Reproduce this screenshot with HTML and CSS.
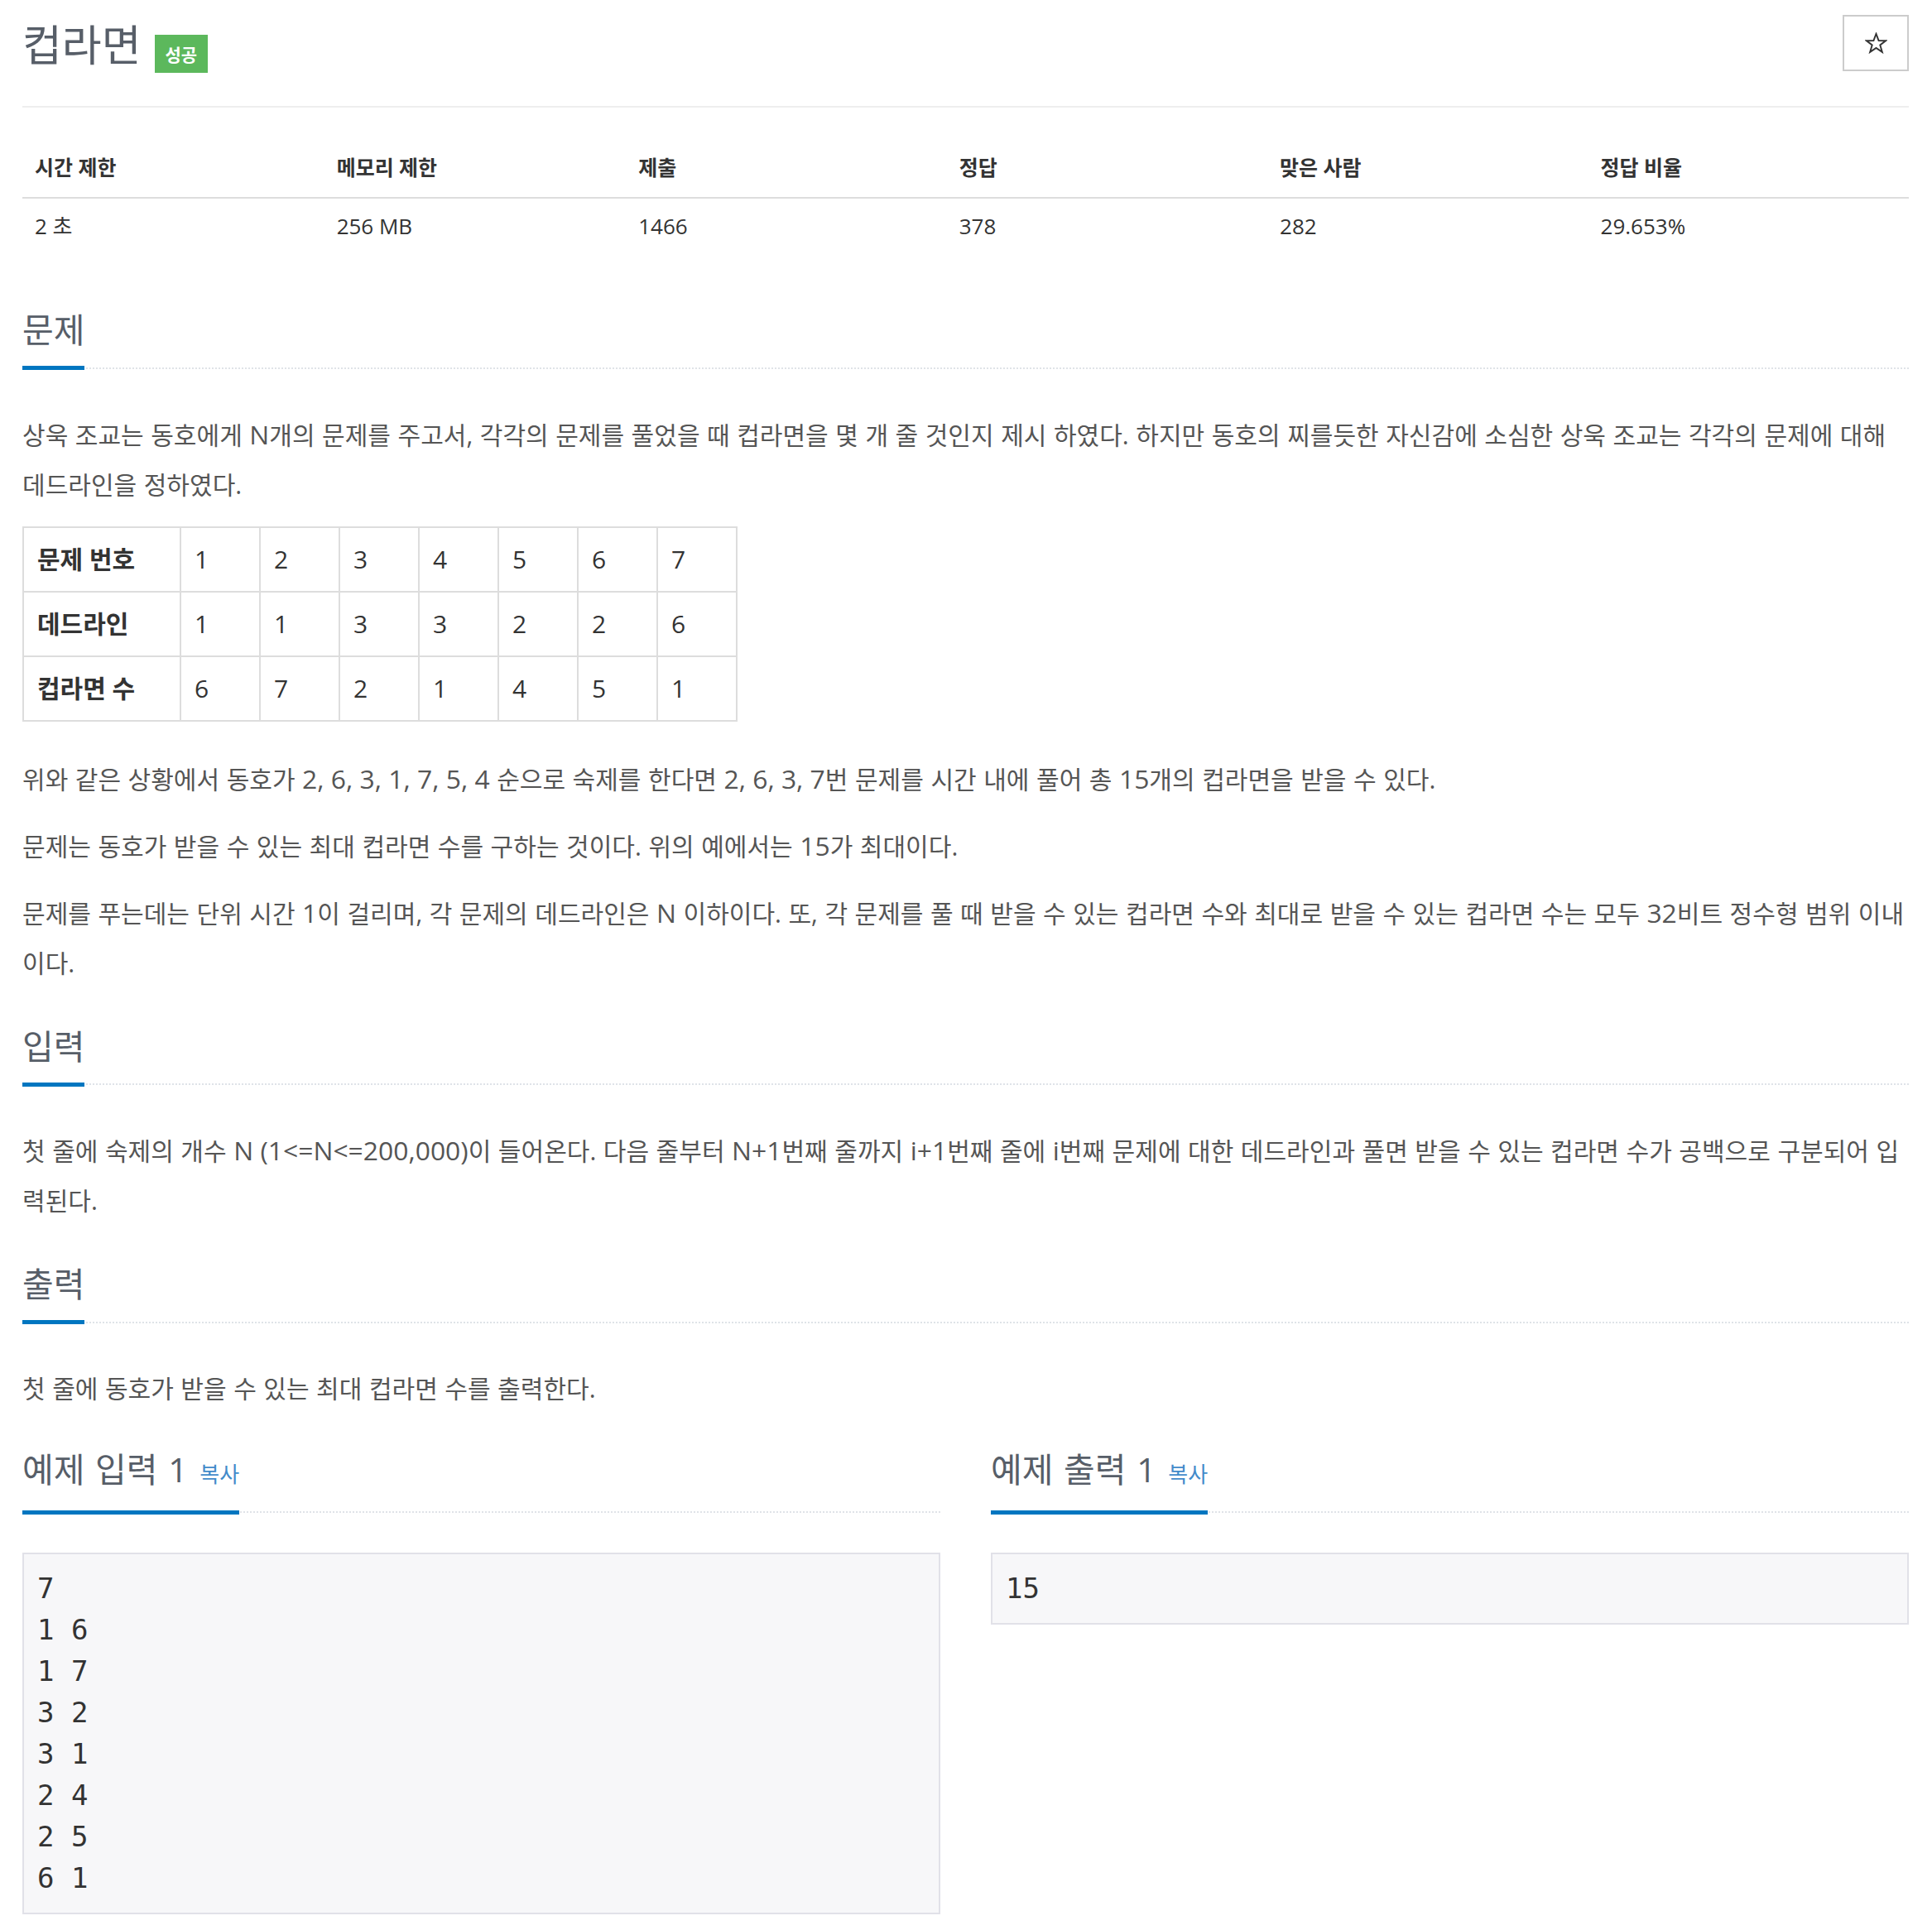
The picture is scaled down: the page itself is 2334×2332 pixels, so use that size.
FILE: index.html
```html
<!DOCTYPE html>
<html lang="ko">
<head>
<meta charset="utf-8">
<title>컵라면</title>
<link rel="stylesheet" href="styles.css">
</head>
<body>
<div class="page">
  <header class="page-header">
    <h1 class="title"><span class="title-text">컵라면</span><span class="badge">성공</span></h1>
    <button class="star-btn" type="button" aria-label="즐겨찾기">
      <svg width="27" height="26" viewBox="0 0 28 27"><polygon points="14,2 17.2,10.4 26,10.6 19,16 21.6,24.8 14,19.6 6.4,24.8 9,16 2,10.6 10.8,10.4" fill="none" stroke="#333" stroke-width="2" stroke-linejoin="miter"/></svg>
    </button>
  </header>

  <table class="stats">
    <thead>
      <tr><th class="w16">시간 제한</th><th class="w16">메모리 제한</th><th class="w17">제출</th><th class="w17">정답</th><th class="w17">맞은 사람</th><th class="w17">정답 비율</th></tr>
    </thead>
    <tbody>
      <tr><td>2 초</td><td>256 MB</td><td>1466</td><td>378</td><td>282</td><td>29.653%</td></tr>
    </tbody>
  </table>

  <section class="section first">
    <h2 class="headline"><span class="hl">문제</span></h2>
    <div class="text">
      <p>상욱 조교는 동호에게 <span class="en">N</span>개의 문제를 주고서, 각각의 문제를 풀었을 때 컵라면을 몇 개 줄 것인지 제시 하였다. 하지만 동호의 찌를듯한 자신감에 소심한 상욱 조교는 각각의 문제에 대해 데드라인을 정하였다.</p>
      <table class="deadline">
        <tbody>
          <tr><th>문제 번호</th><td>1</td><td>2</td><td>3</td><td>4</td><td>5</td><td>6</td><td>7</td></tr>
          <tr><th>데드라인</th><td>1</td><td>1</td><td>3</td><td>3</td><td>2</td><td>2</td><td>6</td></tr>
          <tr><th>컵라면 수</th><td>6</td><td>7</td><td>2</td><td>1</td><td>4</td><td>5</td><td>1</td></tr>
        </tbody>
      </table>
      <p>위와 같은 상황에서 동호가 <span class="en">2, 6, 3, 1, 7, 5, 4</span> 순으로 숙제를 한다면 <span class="en">2, 6, 3, 7</span>번 문제를 시간 내에 풀어 총 <span class="en">15</span>개의 컵라면을 받을 수 있다.</p>
      <p>문제는 동호가 받을 수 있는 최대 컵라면 수를 구하는 것이다. 위의 예에서는 <span class="en">15</span>가 최대이다.</p>
      <p>문제를 푸는데는 단위 시간 <span class="en">1</span>이 걸리며, 각 문제의 데드라인은 <span class="en">N</span> 이하이다. 또, 각 문제를 풀 때 받을 수 있는 컵라면 수와 최대로 받을 수 있는 컵라면 수는 모두 <span class="en">32</span>비트 정수형 범위 이내이다.</p>
    </div>
  </section>

  <section class="section">
    <h2 class="headline"><span class="hl">입력</span></h2>
    <div class="text">
      <p>첫 줄에 숙제의 개수 <span class="en">N (1&lt;=N&lt;=200,000)</span>이 들어온다. 다음 줄부터 <span class="en">N+1</span>번째 줄까지 <span class="en">i+1</span>번째 줄에 <span class="en">i</span>번째 문제에 대한 데드라인과 풀면 받을 수 있는 컵라면 수가 공백으로 구분되어 입력된다.</p>
    </div>
  </section>

  <section class="section">
    <h2 class="headline"><span class="hl">출력</span></h2>
    <div class="text">
      <p>첫 줄에 동호가 받을 수 있는 최대 컵라면 수를 출력한다.</p>
    </div>
  </section>

  <div class="samples">
    <section class="sample-col">
      <h2 class="headline"><span class="hl">예제 입력 1 <a class="copy" href="#">복사</a></span></h2>
      <pre class="sample">7
1 6
1 7
3 2
3 1
2 4
2 5
6 1</pre>
    </section>
    <section class="sample-col">
      <h2 class="headline"><span class="hl">예제 출력 1 <a class="copy" href="#">복사</a></span></h2>
      <pre class="sample">15</pre>
    </section>
  </div>
</div>
</body>
</html>
```
FILE: styles.css
```css
html, body {
  margin: 0;
  padding: 0;
  background: #fff;
}

body {
  font-family: "Open Sans", "Noto Sans CJK KR", sans-serif;
  color: #333;
}

.page {
  padding: 0 28px 0 27px;
}

/* header */
.page-header {
  display: flex;
  justify-content: space-between;
  align-items: flex-start;
  padding-top: 18px;
  padding-bottom: 40px;
  border-bottom: 2px solid #eee;
}

.title {
  display: flex;
  align-items: flex-start;
  margin: 0;
  font-weight: 400;
}

.title-text {
  font-family: "Noto Sans CJK KR", sans-serif;
  font-size: 52px;
  line-height: 68px;
  color: #575e68;
}

.badge {
  margin-left: 16px;
  margin-top: 24px;
  height: 46px;
  padding: 0 13px;
  background: #5cb85c;
  color: #fff;
  font-family: "Noto Sans CJK KR", sans-serif;
  font-size: 21px;
  font-weight: 700;
  line-height: 46px;
}

.star-btn {
  width: 80px;
  height: 68px;
  margin: 0;
  padding: 0;
  background: #fff;
  border: 2px solid #ccc;
  display: flex;
  align-items: center;
  justify-content: center;
}

/* stats table */
.stats {
  width: 100%;
  border-collapse: collapse;
  margin-top: 36px;
  margin-bottom: 68px;
  color: #333;
}

.stats th, .stats td {
  text-align: left;
  padding: 12px 15px;
}

.stats th {
  font-size: 25px;
  line-height: 48px;
  font-weight: 700;
  border-bottom: 2px solid #ddd;
}

.stats td {
  font-size: 26px;
  line-height: 42px;
}

.stats .w16 { width: 16%; }
.stats .w17 { width: 17%; }

/* sections */
.section {
  margin-top: 46px;
}

.section.first {
  margin-top: 0;
}

.headline {
  display: flex;
  margin: 0 0 49px;
  border-bottom: 2px dotted #dfe3e8;
  font-weight: 400;
}

.hl {
  font-family: "Open Sans", "Noto Sans CJK KR", sans-serif;
  font-size: 41px;
  line-height: 48px;
  word-spacing: 2px;
  color: #575e68;
  padding-bottom: 20px;
  border-bottom: 5px solid #0076c0;
  margin-bottom: -3.5px;
}

.copy {
  font-size: 26px;
  word-spacing: 0;
  color: #428bca;
  text-decoration: none;
  margin-left: 2px;
}

.text {
  font-size: 30.05px;
  line-height: 60px;
  word-spacing: 0.7px;
  color: #555;
}

.text .en {
  font-size: 1.06em;
  word-spacing: 0;
}

.text p {
  margin: 0 0 20px;
}

/* deadline table */
.deadline {
  border-collapse: collapse;
  margin: 0 0 39px;
  font-size: 30px;
  word-spacing: 0;
  color: #333;
}

.deadline th, .deadline td {
  border: 2px solid #ddd;
  padding: 15px 16px;
  line-height: 46px;
  text-align: left;
}

.deadline th {
  width: 156px;
  font-weight: 700;
}

.deadline td {
  width: 62px;
}

/* samples */
.samples {
  display: grid;
  grid-template-columns: 1fr 1fr;
  column-gap: 61px;
  margin-top: 43px;
}

.samples .headline {
  margin-bottom: 48px;
}

.sample {
  margin: 0;
  padding: 16px 16px 17px;
  background: #f7f7f9;
  border: 2px solid #e1e1e8;
  font-family: "DejaVu Sans Mono", monospace;
  font-size: 34px;
  line-height: 50px;
  color: #333;
}
```
